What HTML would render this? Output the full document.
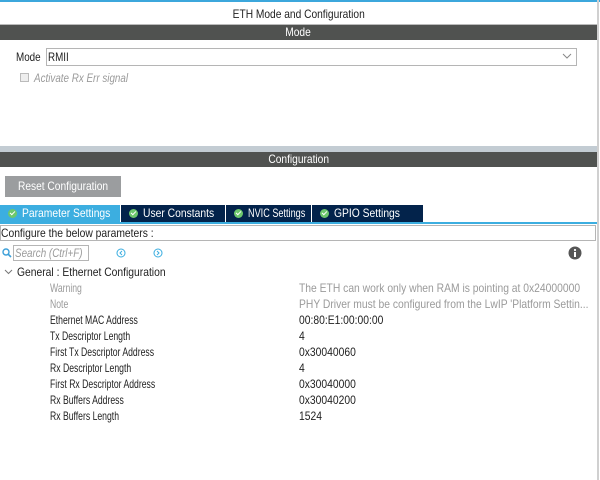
<!DOCTYPE html>
<html><head><style>
*{margin:0;padding:0;box-sizing:border-box}
body{width:600px;height:480px;background:#fff;font-family:"Liberation Sans",sans-serif;font-size:11px;color:#222;position:relative;overflow:hidden}
.a{position:absolute;white-space:nowrap}
.c{display:inline-block;transform:scaleX(.82);transform-origin:0 50%;white-space:nowrap}
.l{display:inline-block;transform:scaleX(.72);transform-origin:0 50%;white-space:nowrap}
.v{display:inline-block;transform:scaleX(.86);transform-origin:0 50%;white-space:nowrap}
.cc{display:inline-block;transform:scaleX(.85);transform-origin:50% 50%}
.lbl{left:50px}
.val{left:299px}
.g{color:#9a9a9a}
.tab{position:absolute;top:205px;height:17px;color:#fff;font-size:12px;line-height:17px;padding-left:8px;white-space:nowrap;overflow:hidden}
.ck{display:inline-block;width:9px;height:9px;border-radius:50%;background:#6dc86d;vertical-align:-1px;margin-right:5px;position:relative}
.ck:after{content:"";position:absolute;left:3px;top:1px;width:2px;height:4px;border:solid #fff;border-width:0 1.5px 1.5px 0;transform:rotate(45deg)}
</style></head><body>
<div class="a" style="left:0;top:0;width:600px;height:2px;background:#3ca7dc"></div>
<div class="a" style="left:597px;top:0;width:2px;height:480px;background:#d0d0d0"></div>
<div class="a" style="left:0;top:6px;width:597px;text-align:center;font-size:12px;line-height:16px"><span class="cc">ETH Mode and Configuration</span></div>
<div class="a" style="left:0;top:24px;width:597px;height:1px;background:#bbb"></div>
<div class="a" style="left:0;top:25px;width:597px;height:15px;background:#505250;color:#fff;text-align:center;font-size:12px;line-height:15px"><span class="cc">Mode</span></div>
<div class="a" style="left:16px;top:50px;font-size:12px;line-height:14px"><span class="c">Mode</span></div>
<div class="a" style="left:46px;top:48px;width:531px;height:18px;border:1px solid #b5b5b5;background:#fff"></div>
<div class="a" style="left:48px;top:50px;font-size:12px;line-height:14px"><span class="c">RMII</span></div>
<svg class="a" style="left:562px;top:53px" width="10" height="7"><path d="M1 1l4 4 4-4" fill="none" stroke="#888" stroke-width="1"/></svg>
<div class="a" style="left:20px;top:73px;width:9px;height:9px;border:1px solid #bbb;background:#eee"></div>
<div class="a g" style="left:34px;top:71px;font-style:italic;font-size:12px;line-height:14px"><span class="c">Activate Rx Err signal</span></div>
<div class="a" style="left:0;top:146px;width:597px;height:6px;background:#c3ccd3"></div>
<div class="a" style="left:0;top:152px;width:597px;height:15px;background:#505250;color:#fff;text-align:center;font-size:12px;line-height:15px"><span class="cc">Configuration</span></div>
<div class="a" style="left:5px;top:176px;width:116px;height:21px;background:#9b9d9f;color:#fff;font-size:12px;line-height:21px;text-align:center"><span class="cc">Reset Configuration</span></div>
<div class="tab" style="left:0;width:120px;background:#3caee0"><span class="ck"></span><span class="v">Parameter Settings</span></div>
<div class="tab" style="left:121px;width:104px;background:#03234b"><span class="ck"></span><span class="v">User Constants</span></div>
<div class="tab" style="left:226px;width:85px;background:#03234b"><span class="ck"></span><span class="v" style="transform:scaleX(.76)">NVIC Settings</span></div>
<div class="tab" style="left:312px;width:111px;background:#03234b"><span class="ck"></span><span class="v">GPIO Settings</span></div>
<div class="a" style="left:0;top:222px;width:597px;height:2px;background:#3caee0"></div>
<div class="a" style="left:0;top:225px;width:596px;height:16px;border:1px solid #b5b5b5"></div>
<div class="a" style="left:1px;top:226px;font-size:12px;line-height:14px"><span class="v">Configure the below parameters :</span></div>
<svg class="a" style="left:2px;top:248px" width="10" height="10"><circle cx="4" cy="4" r="3" fill="none" stroke="#3c9fd8" stroke-width="1.4"/><path d="M6 6l3 3" stroke="#3c9fd8" stroke-width="1.6"/></svg>
<div class="a" style="left:13px;top:245px;width:76px;height:16px;border:1px solid #b5b5b5"></div>
<div class="a g" style="left:15px;top:246px;font-style:italic;font-size:12px;line-height:14px"><span class="c">Search (Ctrl+F)</span></div>
<svg class="a" style="left:116px;top:248px" width="10" height="10"><circle cx="5" cy="5" r="4" fill="none" stroke="#3caee0"/><path d="M6 3L4 5l2 2" fill="none" stroke="#3caee0"/></svg>
<svg class="a" style="left:153px;top:248px" width="10" height="10"><circle cx="5" cy="5" r="4" fill="none" stroke="#3caee0"/><path d="M4 3l2 2-2 2" fill="none" stroke="#3caee0"/></svg>
<svg class="a" style="left:568px;top:246px" width="14" height="14"><circle cx="7" cy="7" r="6.5" fill="#555"/><rect x="6" y="6" width="2" height="5" fill="#fff"/><circle cx="7" cy="4" r="1.1" fill="#fff"/></svg>
<svg class="a" style="left:4px;top:269px" width="9" height="6"><path d="M1 1l3.5 3.5L8 1" fill="none" stroke="#777"/></svg>
<div class="a" style="left:17px;top:265px;font-size:12px;line-height:14px"><span class="v">General : Ethernet Configuration</span></div>
<div class="a lbl g" style="top:281px;font-size:12px;line-height:14px"><span class="l">Warning</span></div>
<div class="a val g" style="top:281px;font-size:12px;line-height:14px"><span class="v">The ETH can work only when RAM is pointing at 0x24000000</span></div>
<div class="a lbl g" style="top:297px;font-size:12px;line-height:14px"><span class="l">Note</span></div>
<div class="a val g" style="top:297px;font-size:12px;line-height:14px"><span class="v">PHY Driver must be configured from the LwIP 'Platform Settin...</span></div>
<div class="a lbl" style="top:313px;font-size:12px;line-height:14px"><span class="l">Ethernet MAC Address</span></div>
<div class="a val" style="top:313px;font-size:12px;line-height:14px"><span class="v">00:80:E1:00:00:00</span></div>
<div class="a lbl" style="top:329px;font-size:12px;line-height:14px"><span class="l">Tx Descriptor Length</span></div>
<div class="a val" style="top:329px;font-size:12px;line-height:14px"><span class="v">4</span></div>
<div class="a lbl" style="top:345px;font-size:12px;line-height:14px"><span class="l">First Tx Descriptor Address</span></div>
<div class="a val" style="top:345px;font-size:12px;line-height:14px"><span class="v">0x30040060</span></div>
<div class="a lbl" style="top:361px;font-size:12px;line-height:14px"><span class="l">Rx Descriptor Length</span></div>
<div class="a val" style="top:361px;font-size:12px;line-height:14px"><span class="v">4</span></div>
<div class="a lbl" style="top:377px;font-size:12px;line-height:14px"><span class="l">First Rx Descriptor Address</span></div>
<div class="a val" style="top:377px;font-size:12px;line-height:14px"><span class="v">0x30040000</span></div>
<div class="a lbl" style="top:393px;font-size:12px;line-height:14px"><span class="l">Rx Buffers Address</span></div>
<div class="a val" style="top:393px;font-size:12px;line-height:14px"><span class="v">0x30040200</span></div>
<div class="a lbl" style="top:409px;font-size:12px;line-height:14px"><span class="l">Rx Buffers Length</span></div>
<div class="a val" style="top:409px;font-size:12px;line-height:14px"><span class="v">1524</span></div>
</body></html>
